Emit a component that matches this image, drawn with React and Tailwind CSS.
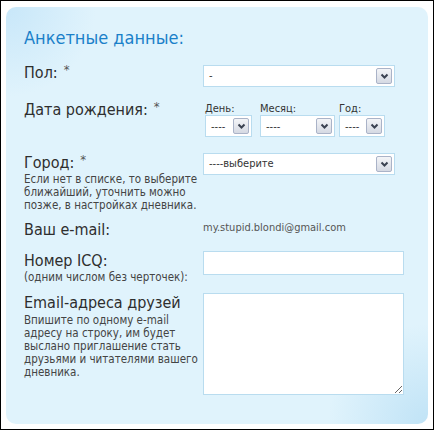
const font = "font-['DejaVu_Sans_Condensed','DejaVu_Sans',sans-serif]";

function Arrow() {
  return (
    <span className="pointer-events-none absolute right-[2px] top-[2px] bottom-[2px] w-[16px] border border-[#aab3c8] rounded-[2px] bg-[linear-gradient(#f4f5f8,#d5d9e3)] flex items-center justify-center">
      <svg width="9" height="7" viewBox="0 0 9 7">
        <path d="M1.5 1.5 L4.5 4.5 L7.5 1.5" fill="none" stroke="#3b4251" strokeWidth="2" />
      </svg>
    </span>
  );
}

function Select({ value, className }) {
  return (
    <div className={`relative h-[22px] border border-[#b9dcef] bg-white ${className}`}>
      <div className="h-full flex items-center pl-[5px] text-[11px] text-[#333]">{value}</div>
      <Arrow />
    </div>
  );
}

function Label({ children, star }) {
  return (
    <div className="text-[16px] leading-[20px] text-[#2e2e2e]">
      {children}
      {star && <span className="ml-[6px] text-[13px] leading-[14px] align-top text-[#555]">*</span>}
    </div>
  );
}

function Hint({ children }) {
  return <div className="text-[11.5px] leading-[13px] text-[#444]">{children}</div>;
}

export default function App() {
  return (
    <div className={`w-[434px] h-[430px] border border-black bg-white pt-[6px] pl-[5px] pr-[5px] pb-[5px] ${font}`}>
      <div className="h-full rounded-[10px] pl-[18px] pt-[20px] bg-[#e0f3fc] bg-[radial-gradient(circle_at_0_0,#c8e7f9,transparent_90px),radial-gradient(circle_at_100%_100%,#c0e3f6,transparent_100px)]">
        <div className="text-[18px] leading-[22px] text-[#1a80c9]">Анкетные данные:</div>

        <div className="flex mt-[14px]">
          <div className="w-[179px]">
            <Label star>Пол:</Label>
          </div>
          <Select value="-" className="w-[192px] mt-[2px]" />
        </div>

        <div className="flex mt-[13px]">
          <div className="w-[179px]">
            <Label star>Дата рождения:</Label>
          </div>
          <div className="flex text-[11px] leading-[13px] text-[#333] pt-[2px]">
            <div className="flex flex-col ml-[2px]">
              <span>День:</span>
              <Select value="----" className="w-[47px]" />
            </div>
            <div className="flex flex-col ml-[8px]">
              <span>Месяц:</span>
              <Select value="----" className="w-[75px]" />
            </div>
            <div className="flex flex-col ml-[4px]">
              <span>Год:</span>
              <Select value="----" className="w-[46px]" />
            </div>
          </div>
        </div>

        <div className="flex mt-[16px]">
          <div className="w-[179px]">
            <Label star>Город:</Label>
            <Hint>
              Если нет в списке, то выберите
              <br />
              ближайший, уточнить можно
              <br />
              позже, в настройках дневника.
            </Hint>
          </div>
          <Select value="----выберите" className="w-[192px]" />
        </div>

        <div className="flex mt-[8px]">
          <div className="w-[179px]">
            <Label>Ваш e-mail:</Label>
          </div>
          <div className="text-[11px] leading-[13px] text-[#555] pt-[1px]">my.stupid.blondi@gmail.com</div>
        </div>

        <div className="flex mt-[11px]">
          <div className="w-[179px]">
            <Label>Номер ICQ:</Label>
            <Hint>(одним числом без черточек):</Hint>
          </div>
          <input type="text" className="w-[201px] h-[24px] border border-[#b9dcef] bg-white outline-none" />
        </div>

        <div className="flex mt-[9px]">
          <div className="w-[179px]">
            <Label>Email-адреса друзей</Label>
            <div className="mt-[1px]">
              <Hint>
                Впишите по одному e-mail
                <br />
                адресу на строку, им будет
                <br />
                выслано приглашение стать
                <br />
                друзьями и читателями вашего
                <br />
                дневника.
              </Hint>
            </div>
          </div>
          <textarea className="w-[201px] h-[102px] border border-[#b9dcef] bg-white outline-none" />
        </div>
      </div>
    </div>
  );
}
